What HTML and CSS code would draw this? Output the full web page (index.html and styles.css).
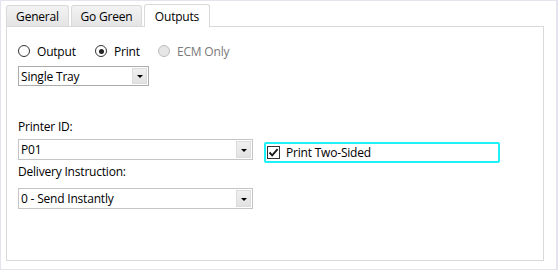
FILE: index.html
```html
<!DOCTYPE html>
<html>
<head>
<meta charset="utf-8">
<link rel="stylesheet" href="styles.css">
</head>
<body>
<div class="window">
  <div class="tabs">
    <div class="tab t-general">General</div>
    <div class="tab t-green">Go Green</div>
    <div class="tab t-outputs active">Outputs</div>
  </div>
  <div class="panel">
    <div class="radios">
      <label class="radio r-output"><span class="circle"></span><span>Output</span></label>
      <label class="radio r-print"><span class="circle checked"></span><span>Print</span></label>
      <label class="radio r-ecm disabled"><span class="circle"></span><span>ECM Only</span></label>
    </div>
    <div class="combo tray">
      <span class="value">Single Tray</span>
      <span class="btn"><span class="arrow"></span></span>
    </div>
    <div class="label label-printer">Printer ID:</div>
    <div class="row">
      <div class="combo wide">
        <span class="value">P01</span>
        <span class="btn"><span class="arrow"></span></span>
      </div>
      <div class="check-focus">
        <span class="checkbox"><svg width="11" height="11" viewBox="0 0 11 11"><path d="M1.5 5.5 L4.2 8.3 L9.6 2.2" fill="none" stroke="#1a1a1a" stroke-width="1.9"/></svg></span>
        <span class="check-text">Print Two-Sided</span>
      </div>
    </div>
    <div class="label label-delivery">Delivery Instruction:</div>
    <div class="combo wide delivery">
      <span class="value">0 - Send Instantly</span>
      <span class="btn"><span class="arrow"></span></span>
    </div>
  </div>
</div>
</body>
</html>
```
FILE: styles.css
```css
* { box-sizing: border-box; }
html, body { margin: 0; padding: 0; background: #fff; }
body {
  font-family: "Open Sans", "Noto Sans", sans-serif;
  font-size: 12px;
  color: #000;
}
.window {
  width: 558px;
  height: 270px;
  border: 1px solid #e4e4ee;
  border-right-width: 2px;
  padding: 3px 0 0 5px;
  background: #fff;
}
.tabs {
  display: flex;
  align-items: flex-end;
  gap: 2px;
  height: 22px;
  position: relative;
  z-index: 1;
}
.tab {
  height: 21px;
  border: 1px solid #d9d9d9;
  border-bottom: none;
  border-radius: 3px 3px 0 0;
  background: linear-gradient(#f3f3f3, #e4e4e4);
  display: flex;
  align-items: center;
  justify-content: center;
  padding-top: 1px;
  letter-spacing: -0.2px;
}
.t-general { width: 63px; }
.t-green { width: 71px; }
.t-outputs { width: 66px; }
.tab.active {
  height: 23px;
  margin-bottom: -1px;
  background: #fff;
  padding-top: 0;
}
.panel {
  width: 538px;
  height: 235px;
  border: 1px solid #d9d9d9;
  padding: 0 0 0 11px;
  display: flex;
  flex-direction: column;
  align-items: flex-start;
}
.radios {
  display: flex;
  margin-top: 17px;
  height: 14px;
  align-items: center;
}
.radio {
  display: flex;
  align-items: center;
  gap: 7px;
  letter-spacing: -0.2px;
}
.r-output { width: 77px; }
.r-print { width: 63px; }
.circle {
  width: 12px;
  height: 12px;
  border-radius: 50%;
  border: 1px solid #333;
  background: #fff;
  position: relative;
  flex: none;
}
.circle.checked::after {
  content: "";
  position: absolute;
  left: 2.5px;
  top: 2.5px;
  width: 5px;
  height: 5px;
  border-radius: 50%;
  background: #222;
}
.disabled { color: #7a7a7a; }
.disabled .circle { border-color: #bcbcbc; background: #e6e6e6; }
.combo {
  display: flex;
  align-items: stretch;
  height: 21px;
  border: 1px solid #c4c4c4;
  background: #fff;
}
.tray { width: 131px; margin-top: 8px; height: 20px; border-color: #acacac; }
.wide { width: 235px; }
.value {
  flex: 1;
  display: flex;
  align-items: center;
  padding-left: 2px;
  letter-spacing: -0.2px;
}
.btn {
  width: 15px;
  margin: 1px;
  border: 1px solid #dcdcdc;
  background: linear-gradient(#f0f0f0, #e2e2e2);
  display: flex;
  align-items: center;
  justify-content: center;
}
.arrow {
  width: 0;
  height: 0;
  border-left: 3px solid transparent;
  border-right: 3px solid transparent;
  border-top: 3px solid #000;
  margin-top: 1px;
}
.label {
  height: 16px;
  line-height: 16px;
  letter-spacing: -0.2px;
}
.label-printer { margin-top: 33px; }
.row {
  display: flex;
  align-items: flex-start;
  margin-top: 4px;
}
.label-delivery { margin-top: 1px; }
.delivery { margin-top: 8px; }
.check-focus {
  margin-left: 11px;
  margin-top: 3px;
  width: 236px;
  height: 21px;
  border: 2px solid #1ef0f8;
  border-radius: 2px;
  display: flex;
  align-items: center;
  padding-left: 1px;
}
.checkbox {
  width: 13px;
  height: 13px;
  border: 1px solid #333;
  background: #fff;
  display: flex;
  align-items: center;
  justify-content: center;
  flex: none;
}
.check-text {
  margin-left: 6px;
  letter-spacing: -0.2px;
}
```
